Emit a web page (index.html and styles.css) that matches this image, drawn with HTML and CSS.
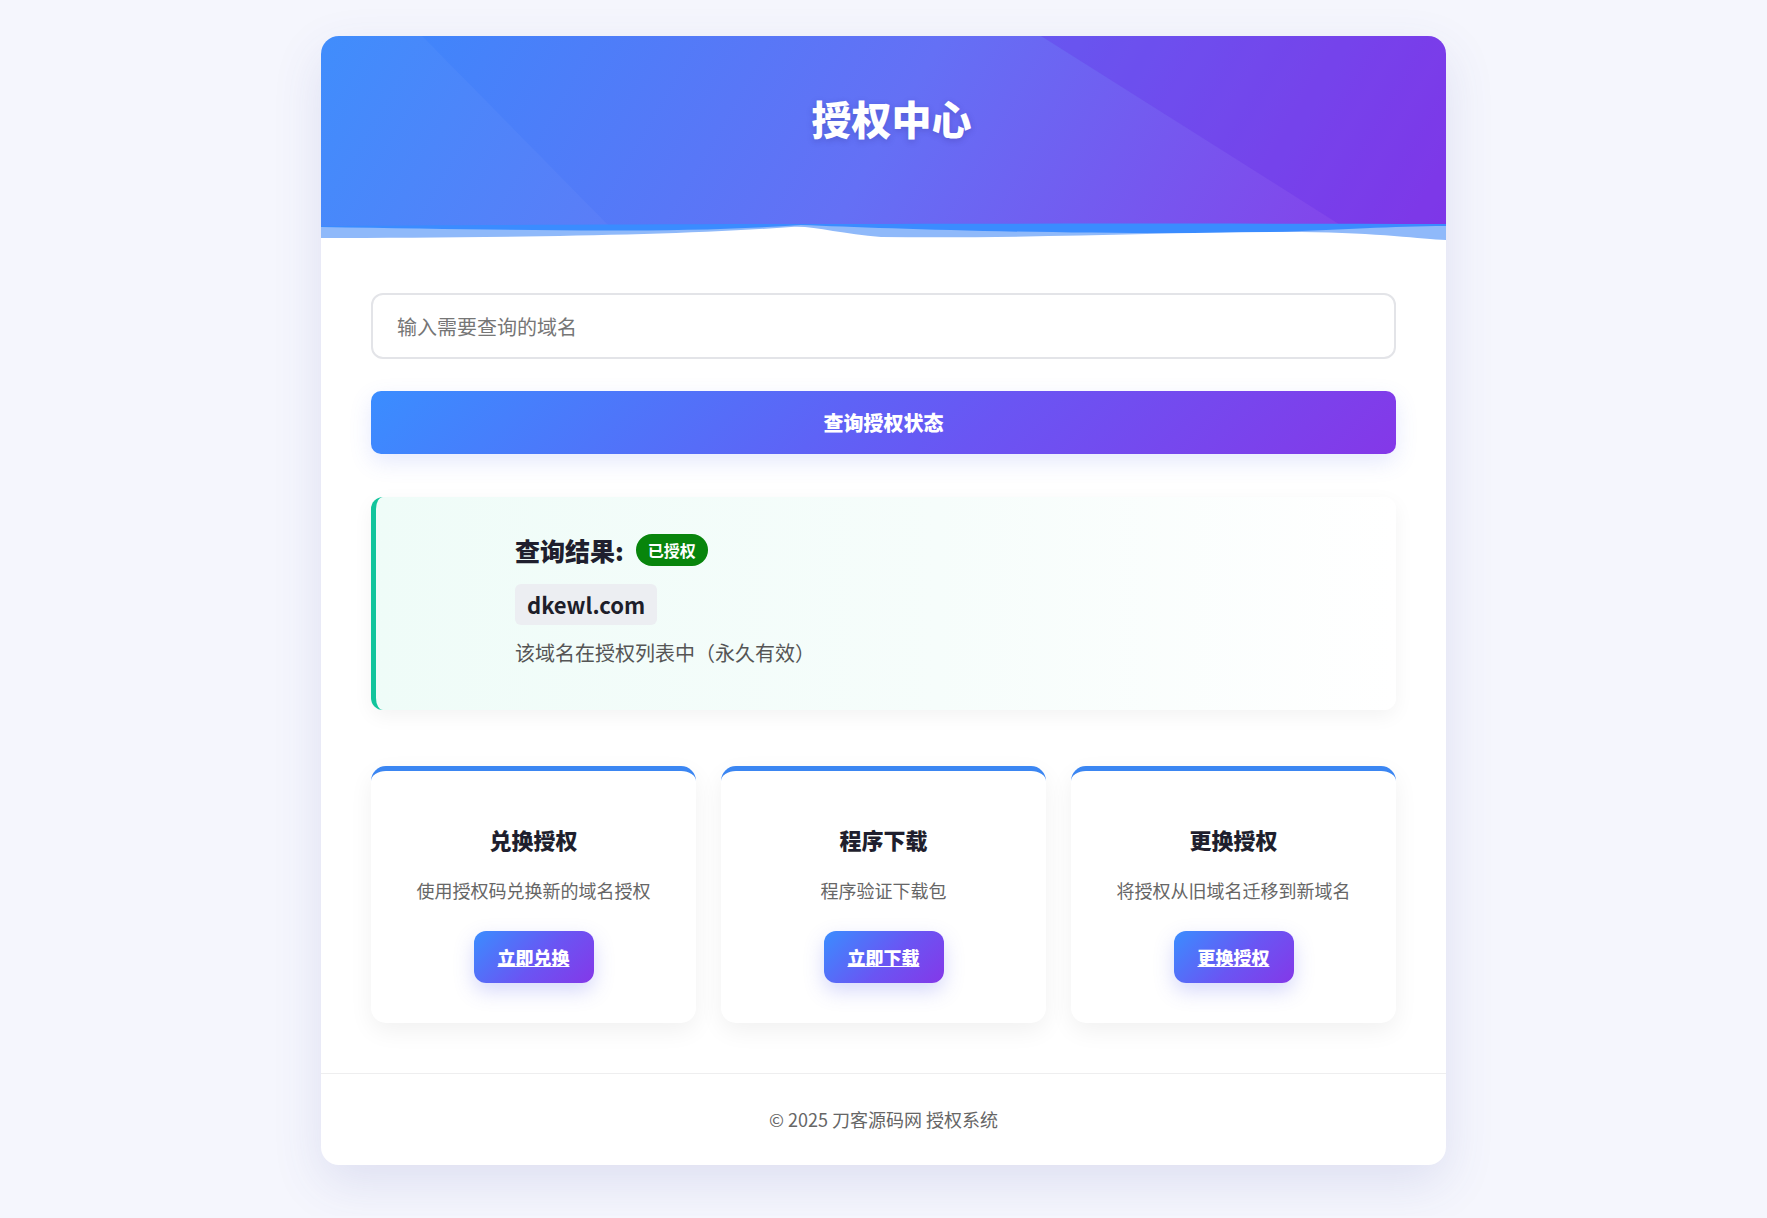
FILE: index.html
```html
<!DOCTYPE html>
<html lang="zh-CN">
<head>
<meta charset="utf-8">
<title>授权中心</title>
<link rel="stylesheet" href="styles.css">
</head>
<body>
<div class="page">
  <div class="card">
    <header class="hero">
      <h1 class="hero-title">授权中心</h1>
      <svg class="wave" viewBox="0 0 1125 30" preserveAspectRatio="none" aria-hidden="true">
        <path d="M0,14 C300,12 700,11 1125,12 L1125,30 L0,30 Z" fill="#3a8cff"/>
        <path d="M0,15 C200,18 350,22 480,13 C560,16 700,22 900,21 C1000,20 1060,14 1125,14 L1125,30 L0,30 Z" fill="#8fb9fa"/>
        <path d="M0,26 C150,26 350,24 470,15 C490,13 520,22 560,25 C700,27 850,20 980,20 C1060,21 1100,27 1125,28 L1125,30 L0,30 Z" fill="#ffffff"/>
      </svg>
    </header>

    <main class="content">
      <input class="domain-input" type="text" placeholder="输入需要查询的域名">
      <button class="query-btn" type="button">查询授权状态</button>

      <section class="result">
        <div class="result-head">
          <span class="result-title">查询结果:</span>
          <span class="badge">已授权</span>
        </div>
        <div class="domain">dkewl.com</div>
        <p class="result-desc">该域名在授权列表中（永久有效）</p>
      </section>

      <div class="features">
        <div class="feature">
          <h3 class="feature-title">兑换授权</h3>
          <p class="feature-desc">使用授权码兑换新的域名授权</p>
          <a class="feature-btn" href="#">立即兑换</a>
        </div>
        <div class="feature">
          <h3 class="feature-title">程序下载</h3>
          <p class="feature-desc">程序验证下载包</p>
          <a class="feature-btn" href="#">立即下载</a>
        </div>
        <div class="feature">
          <h3 class="feature-title">更换授权</h3>
          <p class="feature-desc">将授权从旧域名迁移到新域名</p>
          <a class="feature-btn" href="#">更换授权</a>
        </div>
      </div>
    </main>

    <footer class="foot">© 2025 刀客源码网 授权系统</footer>
  </div>
</div>
</body>
</html>
```

FILE: styles.css
```css
* { box-sizing: border-box; }

html, body {
  margin: 0;
  padding: 0;
}

body {
  background: #f5f6fd;
  font-family: "Noto Sans CJK SC", "Noto Sans", sans-serif;
  color: #222;
}

.page {
  padding: 36px 0 51px;
  display: flex;
  justify-content: center;
}

.card {
  width: 1125px;
  background: #fff;
  border-radius: 18px;
  overflow: hidden;
  box-shadow: 0 18px 50px rgba(70, 80, 160, 0.13);
}

/* ---------- header ---------- */
.hero {
  position: relative;
  height: 206px;
  padding-top: 58px;
  background: linear-gradient(120deg, #3a89fc 0%, #6470f5 50%, #8a3be8 100%);
  overflow: hidden;
}

.hero::before {
  content: "";
  position: absolute;
  inset: 0;
  background: rgba(95, 40, 230, 0.26);
  clip-path: polygon(64% 0, 100% 0, 100% 100%, 93% 100%);
}

.hero::after {
  content: "";
  position: absolute;
  inset: 0;
  background: rgba(255, 255, 255, 0.035);
  clip-path: polygon(0 0, 9% 0, 27% 100%, 0 100%);
}

.hero-title {
  position: relative;
  z-index: 1;
  margin: 0;
  padding-left: 16px;
  text-align: center;
  color: #fff;
  font-size: 40px;
  line-height: 48px;
  font-weight: 900;
  text-shadow: 0 2px 6px rgba(40, 30, 120, 0.25);
}

.wave {
  position: absolute;
  left: 0;
  bottom: 0;
  width: 100%;
  height: 30px;
  display: block;
  z-index: 2;
}

/* ---------- content ---------- */
.content {
  padding: 51px 50px 50px;
  display: flex;
  flex-direction: column;
}

.domain-input {
  width: 100%;
  height: 66px;
  border: 2px solid #e3e4e8;
  border-radius: 12px;
  padding: 0 24px;
  font-family: inherit;
  font-size: 20px;
  color: #333;
  background: #fff;
  outline: none;
}

.domain-input::placeholder {
  color: #767676;
}

.query-btn {
  margin-top: 32px;
  width: 100%;
  height: 63px;
  border: none;
  border-radius: 10px;
  background: linear-gradient(135deg, #3a8dff 0%, #6a55f3 60%, #8438e8 100%);
  color: #fff;
  font-family: inherit;
  font-size: 20px;
  font-weight: 800;
  box-shadow: 0 8px 22px rgba(80, 110, 240, 0.15);
  cursor: pointer;
}

/* ---------- result ---------- */
.result {
  margin-top: 43px;
  height: 213px;
  border-left: 5px solid #12c49c;
  border-radius: 12px;
  background: linear-gradient(90deg, #effcf8 0%, #f6fdfb 55%, #ffffff 100%);
  box-shadow: 0 6px 20px rgba(0, 0, 0, 0.05);
  padding: 37px 30px 0 139px;
  display: flex;
  flex-direction: column;
  align-items: flex-start;
}

.result-head {
  display: flex;
  align-items: center;
  height: 32px;
}

.result-title {
  font-size: 25px;
  line-height: 32px;
  font-weight: 800;
  color: #1f1f2e;
}

.badge {
  margin-left: 12px;
  height: 32px;
  line-height: 32px;
  padding: 0 12px;
  border-radius: 16px;
  background: #08850c;
  color: #fff;
  font-size: 16px;
  font-weight: 700;
}

.domain {
  margin-top: 18px;
  height: 41px;
  line-height: 41px;
  padding: 0 12px;
  border-radius: 6px;
  background: #eceef2;
  font-size: 22px;
  font-weight: 700;
  color: #1e1e2a;
}

.result-desc {
  margin: 13px 0 0;
  font-size: 20px;
  line-height: 30px;
  color: #555;
}

/* ---------- features ---------- */
.features {
  margin-top: 56px;
  display: grid;
  grid-template-columns: repeat(3, 1fr);
  gap: 25px;
}

.feature {
  height: 257px;
  background: #fff;
  border-top: 5px solid #3b86f2;
  border-radius: 15px;
  box-shadow: 0 8px 24px rgba(0, 0, 0, 0.06);
  padding: 53px 20px 0;
  display: flex;
  flex-direction: column;
  align-items: center;
}

.feature-title {
  margin: 0;
  font-size: 22px;
  line-height: 31px;
  font-weight: 800;
  color: #1f1f2e;
}

.feature-desc {
  margin: 22px 0 0;
  font-size: 18px;
  line-height: 27px;
  color: #666;
}

.feature-btn {
  margin-top: 27px;
  height: 52px;
  line-height: 52px;
  padding: 0 24px;
  border-radius: 12px;
  background: linear-gradient(135deg, #3a8dff 0%, #6a55f3 55%, #8438e8 100%);
  color: #fff;
  font-size: 18px;
  font-weight: 800;
  text-decoration: underline;
  box-shadow: 0 8px 20px rgba(90, 100, 240, 0.25);
}

/* ---------- footer ---------- */
.foot {
  border-top: 1px solid #eeeeef;
  padding: 32px 0;
  text-align: center;
  font-size: 18px;
  line-height: 27px;
  color: #666;
}
```
